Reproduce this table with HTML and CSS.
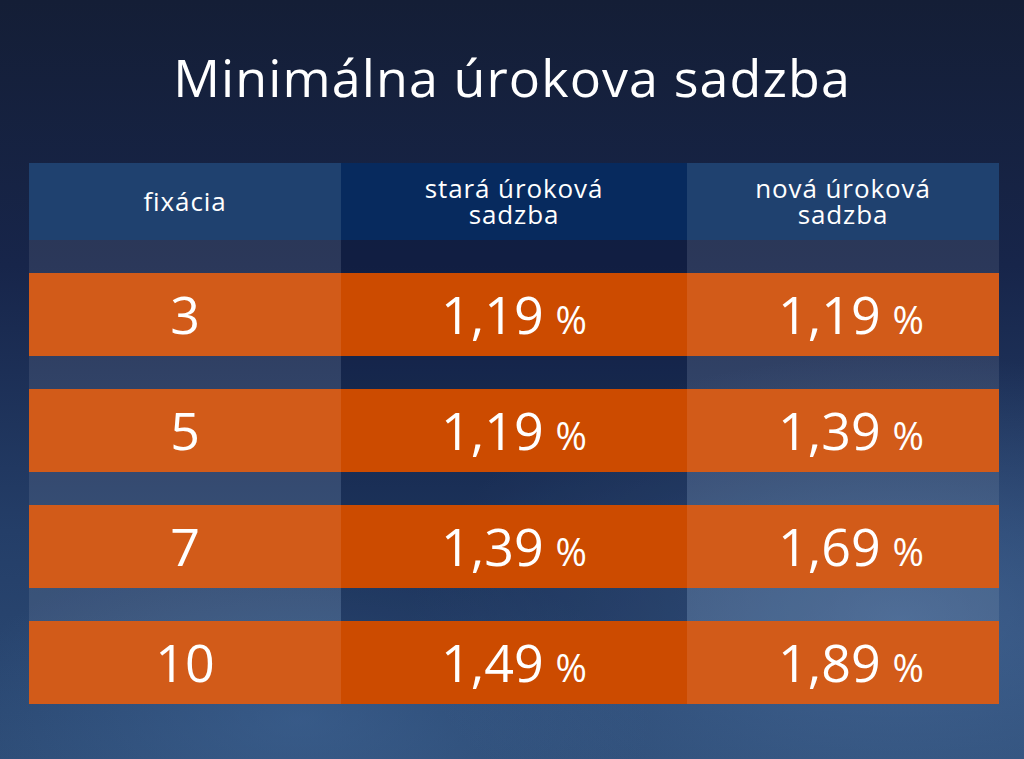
FILE: index.html
```html
<!DOCTYPE html>
<html lang="sk">
<head>
<meta charset="utf-8">
<title>Minimálna úrokova sadzba</title>
<link rel="stylesheet" href="styles.css">
</head>
<body>
<div class="page">
  <h1 class="title">Minimálna úrokova sadzba</h1>
  <div class="table">
    <div class="cell head c1"><span>fixácia</span></div>
    <div class="cell head c2"><span class="two">stará úroková<br>sadzba</span></div>
    <div class="cell head c3"><span class="two">nová úroková<br>sadzba</span></div>

    <div class="cell gap c1"></div><div class="cell gap c2"></div><div class="cell gap c3"></div>
    <div class="cell val c1">3</div>
    <div class="cell val c2">1,19<span class="pct">%</span></div>
    <div class="cell val c3">1,19<span class="pct">%</span></div>

    <div class="cell gap c1"></div><div class="cell gap c2"></div><div class="cell gap c3"></div>
    <div class="cell val c1">5</div>
    <div class="cell val c2">1,19<span class="pct">%</span></div>
    <div class="cell val c3">1,39<span class="pct">%</span></div>

    <div class="cell gap c1"></div><div class="cell gap c2"></div><div class="cell gap c3"></div>
    <div class="cell val c1">7</div>
    <div class="cell val c2">1,39<span class="pct">%</span></div>
    <div class="cell val c3">1,69<span class="pct">%</span></div>

    <div class="cell gap c1"></div><div class="cell gap c2"></div><div class="cell gap c3"></div>
    <div class="cell val c1">10</div>
    <div class="cell val c2">1,49<span class="pct">%</span></div>
    <div class="cell val c3">1,89<span class="pct">%</span></div>
  </div>
</div>
</body>
</html>
```
FILE: styles.css
```css
html, body {
  margin: 0;
  padding: 0;
  width: 1024px;
  height: 759px;
  overflow: hidden;
}
body {
  font-family: "Open Sans", "Noto Sans", "Liberation Sans", sans-serif;
  color: #ffffff;
  background:
    radial-gradient(ellipse 700px 380px at 900px 620px, rgba(90,130,180,0.45), rgba(90,130,180,0) 70%),
    radial-gradient(ellipse 500px 260px at 300px 720px, rgba(70,110,160,0.45), rgba(70,110,160,0) 70%),
    linear-gradient(180deg, #141e36 0%, #17254a 35%, #243e68 70%, #2d4c76 100%);
}
.page {
  display: flex;
  flex-direction: column;
  padding-top: 42px;
}
.title {
  margin: 0;
  text-align: center;
  font-weight: 400;
  font-size: 52px;
  line-height: 70px;
  letter-spacing: 1.1px;
}
.table {
  margin: 51px 0 0 29px;
  width: 970px;
  display: grid;
  grid-template-columns: 312px 346px 312px;
  grid-template-rows: 77px repeat(4, 33px 83px);
}
.cell {
  display: flex;
  align-items: center;
  justify-content: center;
  text-align: center;
}
.head {
  font-size: 26px;
  line-height: 28px;
  letter-spacing: 0.9px;
  padding-bottom: 2px;
  box-sizing: border-box;
}
.head .two {
  display: block;
  line-height: 26px;
}
.head.c1 { background: #1f416f; }
.head.c2 { background: #072a5e; }
.head.c3 { background: #1f416f; }
.gap.c1 { background: rgba(255,255,255,0.09); }
.gap.c2 { background: rgba(0,10,40,0.22); }
.gap.c3 { background: rgba(255,255,255,0.09); }
.val {
  font-size: 52px;
  line-height: 1;
  padding-bottom: 2px;
  box-sizing: border-box;
}
.val.c1 { background: #d25b19; }
.val.c2 { background: #cc4b00; }
.val.c3 { background: #d25b19; padding-left: 16px; }
.pct {
  font-size: 38px;
  margin-left: 12px;
  position: relative;
  top: 5px;
}
```
